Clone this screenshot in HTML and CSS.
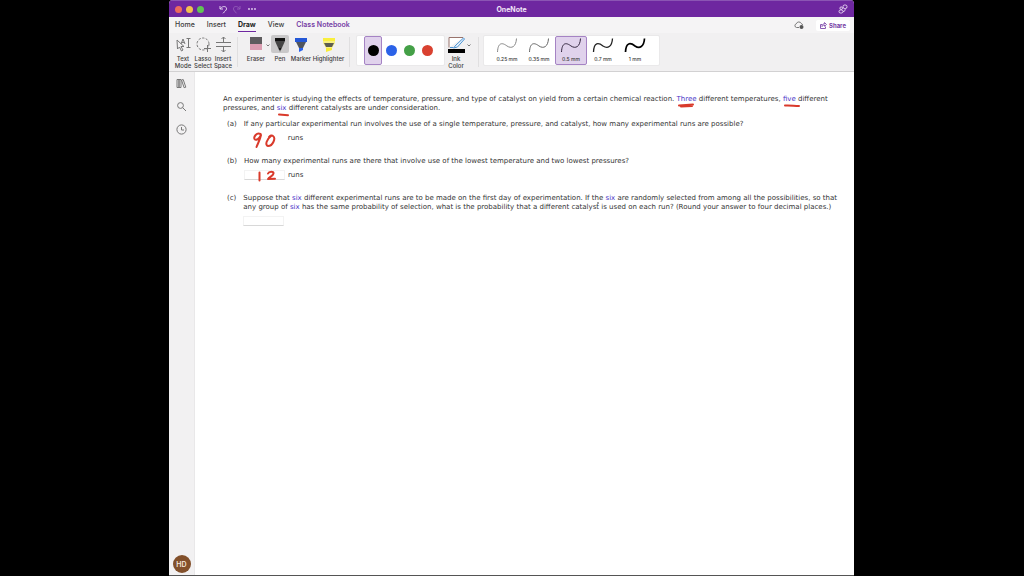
FILE: index.html
```html
<!DOCTYPE html>
<html lang="en">
<head>
<meta charset="utf-8">
<title>OneNote</title>
<link rel="stylesheet" href="styles.css">
</head>
<body>
<div class="window">
  <header class="titlebar">
    <div class="title-left">
      <button class="light red" aria-label="Close"></button>
      <button class="light yellow" aria-label="Minimize"></button>
      <button class="light green" aria-label="Zoom"></button>
      <button class="undo" aria-label="Undo"><svg width="9" height="9" viewBox="0 0 9 9"><path d="M1 1v3h3M1.200 4C3 .5 8 1 7.500 4 7.300 5.500 5.500 6.500 4 8.300"/></svg></button>
      <button class="redo" aria-label="Redo"><svg width="9" height="9" viewBox="0 0 9 9"><path d="M8 1v3H5M7.800 4C6 .5 1 1 1.500 4 1.700 5.500 3 6.500 4.500 8.300"/></svg></button>
      <button class="more" aria-label="More"><svg width="8" height="2" viewBox="0 0 8 2"><circle cx="1" cy="1" r=".9"/><circle cx="4" cy="1" r=".9"/><circle cx="7" cy="1" r=".9"/></svg></button>
    </div>
    <h1 class="app-name">OneNote</h1>
    <button class="ribbon-link" aria-label="Feedback"><svg width="10" height="10" viewBox="0 0 10 10"><rect x="5" y="1" width="4" height="3.500" rx="1.600"/><circle cx="3.200" cy="4.200" r="1.300"/><rect x="1" y="6" width="4" height="3" rx="1.500"/><path d="M5 7.500c1.800 0 2.500-1.200 2-3"/></svg></button>
  </header>

  <nav class="tabs">
    <a href="#home" class="tab">Home</a>
    <a href="#insert" class="tab">Insert</a>
    <a href="#draw" class="tab active">Draw</a>
    <a href="#view" class="tab">View</a>
    <a href="#class" class="tab class-tab">Class Notebook</a>
    <button class="sync" aria-label="Sync status"><svg width="10" height="9" viewBox="0 0 10 9"><path d="M5 6.500H2.500A1.900 1.900 0 0 1 2.300 2.800 2.700 2.700 0 0 1 7.300 2.500 1.600 1.600 0 0 1 8.500 4"/><circle cx="7.500" cy="6" r="2"/></svg></button>
    <button class="share"><svg width="7" height="7" viewBox="0 0 7 7"><path d="M2 2.500H.500v4h5V4.500M2 4.500c0-2 1-2.700 2.500-2.700V.5l2 2-2 1.700V3C3.300 3 2.600 3.500 2 4.500z"/></svg>Share</button>
  </nav>

  <div class="ribbon">
    <button class="tool text-mode"><svg width="17" height="17" viewBox="0 0 17 17"><path d="M2 4l.5 9 2-2 2 4 1.500-1-2-3.500H9zM6 8l2-5 2 5M6.700 6.400h2.600M11.500 2.500h4M13.500 2.500v9M11.500 11.500h4"/></svg>Text<br>Mode</button>
    <button class="tool"><svg width="17" height="17" viewBox="0 0 17 17"><circle cx="8" cy="8" r="6" stroke-dasharray="2.400 1.400"/><path d="M12.500 9v7M9 12.500h7"/></svg>Lasso<br>Select</button>
    <button class="tool"><svg width="17" height="17" viewBox="0 0 17 17"><path d="M1 6.500h15M1 10.500h15M8.500 1v5M8.500 11v5M6.500 3l2-2 2 2M6.500 14l2 2 2-2"/></svg>Insert<br>Space</button>
    <span class="rule"></span>
    <button class="tool pen-tool eraser"><svg width="14" height="17" viewBox="0 0 14 17"><path fill="#5e5c5e" d="M1 2h12v7H1z"/><path fill="#db9db1" d="M1 9h12v6H1z"/></svg>Eraser</button>
    <button class="caret eraser-caret" aria-label="Eraser options"><svg width="4" height="3" viewBox="0 0 4 3"><path d="M.500.500l1.500 1.500L3.500.5"/></svg></button>
    <button class="tool pen-tool pen"><svg width="18" height="18" viewBox="0 0 18 18"><path fill="#111" d="M4 3h10v3H4z"/><path fill="#444" d="M4 6h10l-4 9H8z"/><path fill="#111" d="M8 13h2l-1 4z"/></svg>Pen</button>
    <button class="tool pen-tool marker"><svg width="14" height="18" viewBox="0 0 14 18"><path fill="#2457d6" d="M1 3h12v4H1z"/><path fill="#50555e" d="M2 7h10l-3 6H5z"/><path fill="#2861ed" d="M5 13h4v2l-4 2z"/></svg>Marker</button>
    <button class="tool pen-tool highlighter"><svg width="16" height="18" viewBox="0 0 16 18"><path fill="#f9ef3d" d="M2 3h12v3H2z"/><path fill="#f7ef83" d="M2 6h12v2l-3 5H5L2 8z"/><path fill="#5d5d50" d="M3 8h10l-2 4H5z"/><path fill="#f9ec36" d="M5 13h6v2l-6 2z"/></svg>Highlighter</button>
    <span class="rule"></span>
    <div class="swatches">
      <button class="swatch selected" aria-label="Black"><span class="dot black"></span></button>
      <button class="swatch" aria-label="Blue"><span class="dot blue"></span></button>
      <button class="swatch" aria-label="Green"><span class="dot leaf"></span></button>
      <button class="swatch" aria-label="Red"><span class="dot tomato"></span></button>
    </div>
    <button class="tool ink-color"><svg width="17" height="17" viewBox="0 0 17 17"><path fill="#fff" stroke="#99746d" d="M1 11.500v-10h14"/><path fill="#e9f5ff" stroke="#4e93d2" d="M15.500 2L8 9l-2.500 3 4-1L16.500 3zM2 11.500h3"/><path fill="#000" stroke="none" d="M0 13h17v4H0z"/></svg>Ink<br>Color</button>
    <button class="caret" aria-label="Ink color options"><svg width="4" height="3" viewBox="0 0 4 3"><path d="M.500.500l1.500 1.500L3.500.5"/></svg></button>
    <span class="rule wide"></span>
    <div class="widths">
      <button class="width w1"><svg width="22" height="16" viewBox="0 0 22 16"><path d="M1.500 15C2 5 6.500 5.500 11 9c4.500 3 9 1 9.500-7.500"/></svg>0.25 mm</button>
      <button class="width w2"><svg width="22" height="16" viewBox="0 0 22 16"><path d="M1.500 15C2 5 6.500 5.500 11 9c4.500 3 9 1 9.500-7.500"/></svg>0.35 mm</button>
      <button class="width w3 selected"><svg width="22" height="16" viewBox="0 0 22 16"><path d="M1.500 15C2 5 6.500 5.500 11 9c4.500 3 9 1 9.500-7.500"/></svg>0.5 mm</button>
      <button class="width w4"><svg width="22" height="16" viewBox="0 0 22 16"><path d="M1.500 15C2 5 6.500 5.500 11 9c4.500 3 9 1 9.500-7.500"/></svg>0.7 mm</button>
      <button class="width w5"><svg width="22" height="16" viewBox="0 0 22 16"><path d="M1.500 15C2 5 6.500 5.500 11 9c4.500 3 9 1 9.500-7.500"/></svg>1 mm</button>
    </div>
  </div>

  <div class="workspace">
    <aside class="rail">
      <button aria-label="Notebooks"><svg width="11" height="11" viewBox="0 0 11 11"><path d="M1 1.500h2v8H1zM3 1.500h2v8H3zM5.500 2l1.700-.5 2.600 7.700-1.700.5z"/></svg></button>
      <button aria-label="Search"><svg width="11" height="11" viewBox="0 0 11 11"><circle cx="4.500" cy="4.500" r="2.900"/><path d="M6.700 6.700L10 10"/></svg></button>
      <button aria-label="Recent"><svg width="11" height="11" viewBox="0 0 11 11"><circle cx="5.500" cy="5.500" r="4.600"/><path d="M5.500 3v3H8"/></svg></button>
      <button class="avatar">HD</button>
    </aside>
    <main class="page">
      <p class="intro">An experimenter is studying the effects of temperature, pressure, and type of catalyst on yield from a certain chemical reaction. <em class="marked">Three<svg width="18" height="5" viewBox="0 0 18 5"><path d="M2 2.500l14-1M4 3.500l11-.5"/></svg></em> different temperatures, <em class="marked">five<svg width="18" height="5" viewBox="0 0 18 5"><path d="M2 2.500c5-.5 9 .5 14 .5"/></svg></em> different<br>pressures, and <em class="marked">six<svg width="18" height="5" viewBox="0 0 18 5"><path d="M2 2.500l9 .7"/></svg></em> different catalysts are under consideration.</p>
      <section class="part">
        <span>(a)</span>
        <div>
          <p>If any particular experimental run involves the use of a single temperature, pressure, and catalyst, how many experimental runs are possible?</p>
          <label class="answer"><input class="blank bare" type="text">runs</label>
        </div>
      </section>
      <section class="part">
        <span>(b)</span>
        <div>
          <p>How many experimental runs are there that involve use of the lowest temperature and two lowest pressures?</p>
          <label class="answer"><input class="blank" type="text">runs</label>
        </div>
      </section>
      <section class="part">
        <span>(c)</span>
        <div>
          <p>Suppose that <em>six</em> different experimental runs are to be made on the first day of experimentation. If the <em>six</em> are randomly selected from among all the possibilities, so that<br>any group of <em>six</em> has the same probability of selection, what is the probability that a different catalyst is used on each run? (Round your answer to four decimal places.)</p>
          <div class="answer"><input class="blank" type="text" aria-label="Answer to part c"></div>
        </div>
      </section>
      <svg class="ink" width="640" height="170" viewBox="195 72 640 170">
        <path d="M260.500 134c-4-2-7 3-6 5 1.500 2 5-.5 6.500-4-1 5-3 8-4.500 12M271 136c-4 3-6.500 9-3 10 5 0 8-8 5-10-1-1-3-.5-4 1"/>
        <path d="M259.500 172.500v8M268 173.500c1-2.500 6-2.500 5.500 0-.5 2.500-4 3.500-5.500 5.500l7-.3"/>
        <circle cx="598" cy="203" r=".8"/>
      </svg>
    </main>
  </div>
</div>
</body>
</html>
```
FILE: styles.css
```css
* { box-sizing: border-box; }
body {
  margin: 0;
  padding: 0 170px 0 169px;
  background: #000;
  font-family: Inter, sans-serif;
  font-size: 6px;
  color: #3b3b3b;
}
button {
  margin: 0;
  padding: 0;
  border: 0;
  background: none;
  font: inherit;
  color: inherit;
}
svg { display: block; fill: none; stroke: #777; stroke-width: 1; flex: none; }
p, h1 { margin: 0; }

.window {
  display: flex;
  flex-direction: column;
  min-height: 100vh;
  border-bottom: 1px solid #555;
  border-radius: 4px 4px 0 0;
  overflow: hidden;
  background: #fff;
}
.titlebar {
  display: grid;
  grid-template-columns: 1fr auto 1fr;
  align-items: center;
  height: 17px;
  padding: 0 6px;
  background: #6e27a0;
  border-top: 1px solid #8b55b4;
}
.title-left { display: flex; align-items: center; gap: 4px; }
.light { width: 7px; height: 7px; border-radius: 50%; }
.red { background: #ed6a5e; }
.yellow { background: #f4bf4f; }
.green { background: #61c454; }
.undo { margin-left: 11px; }
.redo { opacity: .3; }
.titlebar svg { stroke: #e3d0ef; }
.more { margin-left: 3px; }
.titlebar .more svg { fill: #e3d0ef; stroke: none; }
.app-name { font-size: 7px; line-height: 9px; font-weight: 700; color: #f0e4f7; }
.ribbon-link { justify-self: end; }

.tabs {
  display: flex;
  align-items: center;
  height: 16px;
  padding: 0 4px 0 6px;
  gap: 12px;
  background: #f5f4f5;
  font-size: 7px;
}
.tab {
  height: 14px;
  line-height: 14px;
  font-weight: 500;
  color: #3b3b3b;
  text-decoration: none;
}
.tab.active { font-weight: 700; color: #222; border-bottom: 1px solid #6e27a0; }
.class-tab { color: #7640a5; font-weight: 600; }
.sync { margin-left: auto; }
.sync circle { fill: #555; stroke: none; }
.share {
  display: flex;
  align-items: center;
  gap: 2px;
  height: 11px;
  padding: 0 4px;
  border-radius: 2px;
  background: #fff;
  color: #7640a5;
  font-size: 6px;
  font-weight: 700;
  line-height: 9px;
}
.share svg { stroke: #8a5ab2; }

.ribbon {
  display: flex;
  align-items: flex-start;
  height: 39px;
  padding: 2px 4px 0;
  background: #f1f0f1;
  border-bottom: 1px solid #d2d1d2;
}
.tool {
  display: flex;
  flex-direction: column;
  align-items: center;
  width: 20px;
  gap: 2px;
  padding-top: 1px;
  line-height: 7px;
  font-weight: 500;
}
.rule { width: 1px; height: 30px; margin: 2px 4px 0; background: #e0dfe0; }
.rule.wide { margin-left: 7px; }
.eraser { width: 28px; }
.pen-tool { gap: 2px; padding-top: 0; }
.eraser { gap: 3px; }
.pen-tool svg { stroke: none; }
.pen svg { background: #c9c8c9; border-radius: 2px; }
.marker { width: 22px; }
.highlighter { width: 33px; }
.caret { margin-top: 9px; }
.eraser-caret { margin-left: -4px; }
.swatches, .widths {
  display: flex;
  height: 31px;
  padding: 0 8px 0 7px;
  background: #fff;
  border: 1px solid #eae9ea;
  border-radius: 2px;
}
.swatches { margin-left: 2px; }
.swatch {
  display: flex;
  align-items: center;
  justify-content: center;
  width: 18px;
  height: 29px;
  border: 1px solid transparent;
  border-radius: 2px;
}
.selected { background: #e0d2ec; border-color: #a583c4; }
.dot { width: 11px; height: 11px; border-radius: 50%; }
.black { background: #000; }
.blue { background: #2b62e8; }
.leaf { background: #44a047; }
.tomato { background: #d94130; }
.ink-color { width: 22px; }
.width {
  display: flex;
  flex-direction: column;
  align-items: center;
  width: 32px;
  height: 29px;
  gap: 3px;
  border: 1px solid transparent;
  border-radius: 2px;
  font-size: 5px;
  font-weight: 500;
  line-height: 6px;
}
.width.selected { border-color: #a583c4; }
.w1 svg { stroke: #888; }
.w2 svg { stroke: #666; }
.w3 svg { stroke: #33263f; }
.w4 svg { stroke: #222; }
.w5 svg { stroke: #000; }
.w4 path { stroke-width: 1.300; }
.w5 path { stroke-width: 1.700; }

.workspace { display: flex; flex: 1; }
.rail {
  display: flex;
  flex-direction: column;
  align-items: center;
  gap: 12px;
  width: 26px;
  padding: 6px 0 2px;
  background: #f2f1f2;
  border-right: 1px solid #e9e8e9;
}
.avatar {
  width: 18px;
  height: 18px;
  margin-top: auto;
  border-radius: 50%;
  background: #82502b;
  color: #f3e6dc;
  font-size: 7px;
  font-weight: 600;
}
.page {
  position: relative;
  flex: 1;
  padding: 23px 12px 16px 28px;
  font-family: "DejaVu Sans", sans-serif;
  font-size: 7px;
  line-height: 9px;
  color: #333;
}
.page em { font-style: normal; color: #4b35c8; }
.marked { position: relative; }
.marked svg { position: absolute; left: 0; top: 100%; }
.part { display: flex; gap: 7px; margin: 0 0 14px 4px; }
.intro { margin-bottom: 7px; }
.answer { display: flex; align-items: center; gap: 3px; margin-top: 4px; }
.blank {
  width: 41px;
  height: 10px;
  padding: 0;
  border: 1px solid #f3f3f3;
  border-bottom-color: #d8d8d8;
  background: transparent;
}
.bare { border-color: transparent; }
.ink { position: absolute; left: 0; top: 0; pointer-events: none; }
.ink path, .marked path { stroke: #d93a2b; stroke-width: 2; stroke-linecap: round; stroke-linejoin: round; }
.ink circle { fill: #333; stroke: none; }
```
